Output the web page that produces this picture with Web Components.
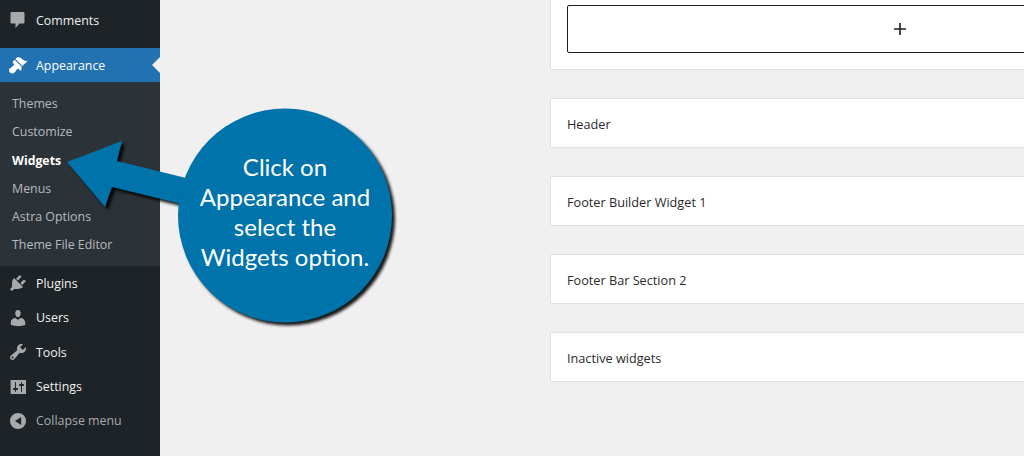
<!DOCTYPE html>
<html>
<head>
<meta charset="utf-8">
<title>Widgets</title>
<style>
html, body { margin: 0; height: 100%; overflow: hidden; }
body { background: #f0f0f1; font-family: "Open Sans", "Liberation Sans", sans-serif; }
.page { display: flex; width: 1024px; height: 456px; overflow: hidden; position: relative; }
</style>
</head>
<body>
<div class="page">
  <wp-sidebar>
    <wp-menu-item icon="comments">Comments</wp-menu-item>
    <wp-menu-item icon="appearance" active>Appearance</wp-menu-item>
    <wp-submenu>
      <wp-sub-item>Themes</wp-sub-item>
      <wp-sub-item>Customize</wp-sub-item>
      <wp-sub-item current>Widgets</wp-sub-item>
      <wp-sub-item>Menus</wp-sub-item>
      <wp-sub-item>Astra Options</wp-sub-item>
      <wp-sub-item>Theme File Editor</wp-sub-item>
    </wp-submenu>
    <wp-menu-item icon="plugins">Plugins</wp-menu-item>
    <wp-menu-item icon="users">Users</wp-menu-item>
    <wp-menu-item icon="tools">Tools</wp-menu-item>
    <wp-menu-item icon="settings">Settings</wp-menu-item>
    <wp-menu-item icon="collapse" muted>Collapse menu</wp-menu-item>
  </wp-sidebar>
  <widget-list>
    <widget-area open></widget-area>
    <widget-area>Header</widget-area>
    <widget-area>Footer Builder Widget 1</widget-area>
    <widget-area>Footer Bar Section 2</widget-area>
    <widget-area>Inactive widgets</widget-area>
  </widget-list>
  <call-out>Click on<br>Appearance and<br>select the<br>Widgets option.</call-out>
</div>

<script>
const ICONS = {
  comments: 'M4 2h11c1 0 1.5.5 1.5 1.5V12c0 1-.5 1.5-1.5 1.5h-3.5L7.5 18v-4.5H4c-1 0-1.5-.5-1.5-1.5V3.5C2.5 2.5 3 2 4 2z',
  appearance: 'M14.48 11.06L7.41 3.99l1.5-1.5c.5-.56 2.3-.47 3.51.32 1.21.8 1.43 1.28 2.91 2.1 1.18.64 2.45 1.26 4.45.85zm-.71.71L6.7 4.7 4.93 6.47c-.39.39-.39 1.02 0 1.41l1.06 1.06c.39.39.39 1.03 0 1.42-.6.6-1.43 1.11-2.21 1.69-.35.26-.7.53-1.01.84C1.43 13.23 1 14.09 1 15c0 .92.36 1.78 1 2.41.63.64 1.49 1 2.41 1 .91 0 1.77-.43 2.4-1.07.31-.31.58-.66.84-1.01.58-.78 1.09-1.61 1.69-2.21.39-.39 1.03-.39 1.42 0l1.06 1.06c.39.39 1.02.39 1.41 0z',
  plugins: 'M13.11 4.36L9.87 7.6 8 5.73l3.24-3.24c.35-.34 1.05-.2 1.56.32.52.51.66 1.21.31 1.55zm-8 1.77l.91-1.12 9.01 9.01-1.19.84c-.71.71-2.63 1.16-3.82 1.16H6.14L4.9 17.26c-.59.59-1.54.59-2.12 0-.59-.58-.59-1.53 0-2.12l1.24-1.24v-3.88c0-1.13.4-3.19 1.09-3.89zm7.26 3.97l3.24-3.24c.34-.35 1.04-.21 1.55.31.52.51.66 1.21.31 1.55l-3.24 3.25z',
  users: 'M10 9.25c-2.27 0-2.73-3.44-2.73-3.44C7 4.02 7.82 2 9.97 2c2.16 0 2.98 2.02 2.71 3.81 0 0-.41 3.44-2.68 3.44zm0 2.57L12.72 10c2.39 0 4.52 2.33 4.52 4.53v2.49s-3.65 1.13-7.24 1.13c-3.65 0-7.24-1.13-7.24-1.13v-2.49c0-2.25 1.94-4.48 4.47-4.48z',
  tools: 'M16.68 9.77c-1.34 1.34-3.3 1.67-4.95.99l-5.41 6.52c-.99.99-2.59.99-3.58 0s-.99-2.59 0-3.57l6.52-5.42c-.68-1.65-.35-3.61.99-4.95 1.28-1.28 3.12-1.62 4.72-1.06l-2.89 2.89 2.82 2.82 2.86-2.87c.53 1.58.18 3.39-1.08 4.65zM3.81 16.21c.4.39 1.04.39 1.43 0 .4-.4.4-1.04 0-1.43-.39-.4-1.03-.4-1.43 0-.39.39-.39 1.03 0 1.43z',
  settings: 'M18 17V3H2.6v14zM8 11h1c.55 0 1 .45 1 1s-.45 1-1 1H8v1.5c0 .28-.22.5-.5.5s-.5-.22-.5-.5V13H6c-.55 0-1-.45-1-1s.45-1 1-1h1V5.5c0-.28.22-.5.5-.5s.5.22.5.5V11zm5-2h-1c-.55 0-1-.45-1-1s.45-1 1-1h1V5.5c0-.28.22-.5.5-.5s.5.22.5.5V7h1c.55 0 1 .45 1 1s-.45 1-1 1h-1v5.5c0 .28-.22.5-.5.5s-.5-.22-.5-.5V9z',
  collapse: 'M10 2a8 8 0 1 1 0 16 8 8 0 0 1 0-16zM13.2 14V6L7 10z'
};

class WpSidebar extends HTMLElement {
  constructor() {
    super();
    this.attachShadow({mode: 'open'});
    this.shadowRoot.innerHTML = `
      <style>
        :host { display: flex; flex-direction: column; flex: none; width: 160px; height: 456px; padding-top: 3px; box-sizing: border-box; background: #1d2327; }
      </style>
      <slot></slot>
    `;
  }
}

class WpMenuItem extends HTMLElement {
  constructor() {
    super();
    this.attachShadow({mode: 'open'});
    const d = ICONS[this.getAttribute('icon')] || '';
    this.shadowRoot.innerHTML = `
      <style>
        :host { display: flex; align-items: center; flex: none; position: relative; height: 34.4px; color: #f0f0f1; font-size: 12.4px; }
        :host([active]) { margin-top: 10.6px; background: #2271b1; color: #fff; }
        :host([muted]) { color: #a7aaad; }
        svg { flex: none; width: 20px; height: 20px; margin: 0 8px; fill: #a7aaad; fill-rule: evenodd; }
        :host([active]) svg { fill: #fff; }
        :host([active])::after { content: ''; position: absolute; right: 0; top: 50%; margin-top: -8px; border: 8px solid transparent; border-right-color: #f0f0f1; border-left-width: 0; }
      </style>
      <svg viewBox="0 0 20 20"><path d="${d}"/></svg>
      <slot></slot>
    `;
  }
}

class WpSubmenu extends HTMLElement {
  constructor() {
    super();
    this.attachShadow({mode: 'open'});
    this.shadowRoot.innerHTML = `
      <style>
        :host { display: flex; flex-direction: column; flex: none; padding: 6.9px 0 7.2px; background: #2c3338; }
      </style>
      <slot></slot>
    `;
  }
}

class WpSubItem extends HTMLElement {
  constructor() {
    super();
    this.attachShadow({mode: 'open'});
    this.shadowRoot.innerHTML = `
      <style>
        :host { display: flex; align-items: center; height: 28.3px; padding-left: 12px; color: rgba(240,246,252,.7); font-size: 12.4px; }
        :host([current]) { color: #fff; font-weight: 700; font-size: 12.3px; }
      </style>
      <slot></slot>
    `;
  }
}

class WidgetList extends HTMLElement {
  constructor() {
    super();
    this.attachShadow({mode: 'open'});
    this.shadowRoot.innerHTML = `
      <style>
        :host { display: flex; flex-direction: column; gap: 28px; flex: none; width: 700px; margin-left: 390px; }
      </style>
      <slot></slot>
    `;
  }
}

class WidgetArea extends HTMLElement {
  constructor() {
    super();
    this.attachShadow({mode: 'open'});
    this.shadowRoot.innerHTML = `
      <style>
        :host { display: flex; align-items: center; box-sizing: border-box; height: 50px; padding: 2px 16px 0; background: #fff; border: 1px solid #e0e0e0; color: #2b2b2b; font-size: 12.7px; }
        :host([open]) { height: 70px; padding: 5px 16px 16px; border-top: 0; align-items: stretch; }
        button { flex: 1; display: none; align-items: center; justify-content: center; padding: 0; background: #fff; border: 1px solid #1e1e1e; border-radius: 2px; }
        :host([open]) button { display: flex; }
        svg { width: 24px; height: 24px; fill: #1e1e1e; }
      </style>
      <slot></slot>
      <button><svg viewBox="0 0 24 24"><path d="M18 11.2h-5.2V6h-1.6v5.2H6v1.6h5.2V18h1.6v-5.2H18z"/></svg></button>
    `;
  }
}

class CallOut extends HTMLElement {
  constructor() {
    super();
    this.attachShadow({mode: 'open'});
    this.shadowRoot.innerHTML = `
      <style>
        :host { position: absolute; left: 60px; top: 100px; width: 350px; height: 240px; display: block; }
        svg { position: absolute; inset: 0; width: 350px; height: 240px; filter: drop-shadow(3px 3px 1.5px rgba(0,0,0,.9)); }
        .copy { position: absolute; left: 118px; top: 52px; width: 214px; text-align: center; color: #fff; font-family: Lato, "Open Sans", sans-serif; font-size: 24px; line-height: 30px; }
      </style>
      <svg viewBox="0 0 350 240">
        <polygon fill="#0073aa" points="7,62 62,41 57,61 130,79 130,106 52,87 45,107"/>
        <circle fill="#0073aa" cx="225" cy="115.5" r="107"/>
      </svg>
      <div class="copy"><slot></slot></div>
    `;
  }
}

customElements.define('wp-sidebar', WpSidebar);
customElements.define('wp-menu-item', WpMenuItem);
customElements.define('wp-submenu', WpSubmenu);
customElements.define('wp-sub-item', WpSubItem);
customElements.define('widget-list', WidgetList);
customElements.define('widget-area', WidgetArea);
customElements.define('call-out', CallOut);
</script>
</body>
</html>
